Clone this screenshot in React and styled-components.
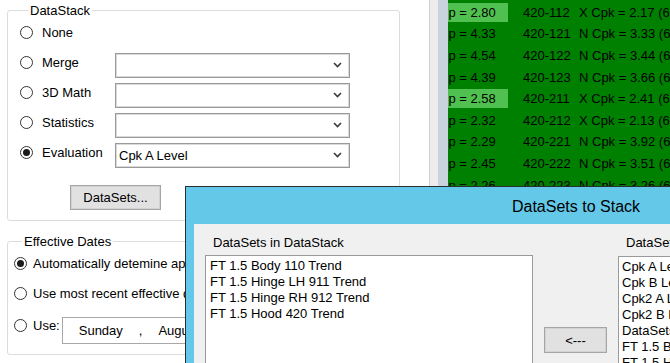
import React from "react";
import styled, { createGlobalStyle } from "styled-components";

const GlobalStyle = createGlobalStyle`
  html, body {
    margin: 0;
    padding: 0;
    overflow: hidden;
    background: #fff;
  }
  body {
    font-family: "Liberation Sans", Arial, sans-serif;
    font-size: 13px;
    color: #000;
  }
`;

const Screen = styled.div`
  position: relative;
  width: 670px;
  height: 363px;
  overflow: hidden;
  display: flex;
  background: #fff;
`;

const LeftPane = styled.div`
  width: 429px;
  flex: none;
  box-sizing: border-box;
  padding-left: 7px;
`;

const GroupBox = styled.fieldset`
  box-sizing: border-box;
  width: 393px;
  margin: ${(p) => p.$top}px 0 0 0;
  padding: 0 0 ${(p) => p.$bottom}px ${(p) => p.$indent}px;
  border: 1px solid #dcdcdc;
  border-radius: 3px;
  min-inline-size: 0;
`;

const Legend = styled.legend`
  margin-left: 8px;
  padding: 0 2px;
  line-height: 15px;
  font-size: 13px;
`;

const OptionRow = styled.div`
  display: flex;
  align-items: flex-start;
  height: ${(p) => p.$h || 30}px;
`;

const RadioLabel = styled.div`
  display: flex;
  align-items: center;
  gap: ${(p) => p.$gap}px;
  width: ${(p) => (p.$w ? `${p.$w}px` : "auto")};
  height: 30px;
  flex: none;
  white-space: nowrap;
`;

const Radio = styled.span`
  box-sizing: border-box;
  width: 13px;
  height: 13px;
  flex: none;
  border-radius: 50%;
  border: 1px solid #333;
  background: #fff;
  display: flex;
  align-items: center;
  justify-content: center;

  &::after {
    content: "";
    width: 7px;
    height: 7px;
    border-radius: 50%;
    background: ${(p) => (p.$checked ? "#1a1a1a" : "transparent")};
  }
`;

const Combo = styled.div`
  box-sizing: border-box;
  width: 235px;
  height: 25px;
  margin-top: 5px;
  padding: 0 7px 0 3px;
  border: 1px solid #999;
  box-shadow: inset 0 0 0 1px #dadada;
  background: #fff;
  display: flex;
  align-items: center;
  justify-content: space-between;
`;

const Button = styled.div`
  box-sizing: border-box;
  width: ${(p) => p.$w}px;
  height: ${(p) => p.$h}px;
  margin: ${(p) => p.$margin};
  border: 1px solid #a5a5a5;
  box-shadow: inset 0 0 0 1px #d2d2d2;
  background: #e1e1e1;
  display: flex;
  align-items: center;
  justify-content: center;
`;

const DatePicker = styled.div`
  box-sizing: border-box;
  width: 200px;
  height: 27px;
  margin: 6.5px 0 0 2px;
  border: 1px solid #a8a8a8;
  background: #fff;
  display: flex;
  align-items: center;
  white-space: nowrap;

  span {
    margin-left: 16px;
  }
`;

const Splitter = styled.div`
  width: 19px;
  flex: none;
  box-sizing: border-box;
  border-left: 1px solid #cfcfcf;
  background: linear-gradient(to right, #ececec 0 8px, #c8d3de 8px);
`;

const Grid = styled.div`
  flex: 1;
  overflow: hidden;
  background: #008000;
`;

const GridRows = styled.div`
  margin-left: -10px;
  padding-top: 1.5px;
`;

const GridRow = styled.div`
  display: flex;
  align-items: center;
  height: 21.6px;
  white-space: nowrap;
`;

const Cell = styled.div`
  flex: none;
  box-sizing: border-box;
  width: ${(p) => p.$w}px;
  height: 19px;
  line-height: 19px;
  padding-left: ${(p) => p.$pad || 0}px;
  background: ${(p) => (p.$hot ? "#50c050" : "transparent")};
`;

const Window = styled.div`
  position: absolute;
  left: 185px;
  top: 186px;
  width: 782px;
  height: 260px;
  box-sizing: border-box;
  border: 1px solid #2d2d2d;
  background: #64c8e9;
  padding: 0 8px 8px;
  display: flex;
  flex-direction: column;
`;

const TitleBar = styled.div`
  height: 37px;
  flex: none;
  padding-top: 3px;
  box-sizing: border-box;
  display: flex;
  align-items: center;
  justify-content: center;
  font-size: 16px;
  color: #000;
`;

const Client = styled.div`
  flex: 1;
  background: #f0f0f0;
  display: flex;
  align-items: flex-start;
`;

const ListColumn = styled.div`
  width: 328px;
  flex: none;
  margin-left: ${(p) => p.$left || 0}px;
  padding-top: 11px;
`;

const ListTitle = styled.div`
  line-height: 16px;
  padding-left: 8px;
  white-space: nowrap;
`;

const ListBox = styled.div`
  box-sizing: border-box;
  height: 200px;
  margin-top: ${(p) => p.$top}px;
  padding: 2px ${(p) => p.$pad}px;
  border: 1px solid #9a9a9a;
  background: #fff;
  overflow: hidden;
`;

const ListItem = styled.div`
  line-height: 16px;
  white-space: nowrap;
`;

const MoveColumn = styled.div`
  width: 85px;
  flex: none;
  display: flex;
  justify-content: center;
`;

const Chevron = () => (
  <svg width="9" height="6" viewBox="0 0 9 6">
    <path d="M1 1 L4.5 4.5 L8 1" fill="none" stroke="#3a3a3a" strokeWidth="1.6" />
  </svg>
);

const stackOptions = [
  { label: "None" },
  { label: "Merge", combo: "" },
  { label: "3D Math", combo: "" },
  { label: "Statistics", combo: "" },
  { label: "Evaluation", combo: "Cpk A Level", checked: true },
];

const gridData = [
  ["Cp = 2.80", "420-112", "X Cpk = 2.17 (60)", true],
  ["Cp = 4.33", "420-121", "N Cpk = 3.33 (60)"],
  ["Cp = 4.54", "420-122", "N Cpk = 3.44 (60)"],
  ["Cp = 4.39", "420-123", "N Cpk = 3.66 (60)"],
  ["Cp = 2.58", "420-211", "X Cpk = 2.41 (60)", true],
  ["Cp = 2.32", "420-212", "X Cpk = 2.13 (60)"],
  ["Cp = 2.29", "420-221", "N Cpk = 3.92 (60)"],
  ["Cp = 2.45", "420-222", "N Cpk = 3.51 (60)"],
  ["Cp = 2.26", "420-223", "N Cpk = 3.26 (60)"],
];

const inStack = [
  "FT 1.5 Body 110 Trend",
  "FT 1.5 Hinge LH 911 Trend",
  "FT 1.5 Hinge RH 912 Trend",
  "FT 1.5 Hood 420 Trend",
];

const available = [
  "Cpk A Level",
  "Cpk B Level",
  "Cpk2 A Level",
  "Cpk2 B Level",
  "DataSets Test",
  "FT 1.5 Body 110 Trend",
  "FT 1.5 Hinge LH 911 Trend",
];

const App = () => {
  return (
    <Screen>
      <GlobalStyle />
      <LeftPane>
        <GroupBox $top={2.5} $bottom={10} $indent={12}>
          <Legend>DataStack</Legend>
          {stackOptions.map((o) => (
            <OptionRow key={o.label}>
              <RadioLabel $gap={9} $w={95}>
                <Radio $checked={o.checked} />
                {o.label}
              </RadioLabel>
              {o.combo !== undefined && (
                <Combo>
                  <span>{o.combo}</span>
                  <Chevron />
                </Combo>
              )}
            </OptionRow>
          ))}
          <Button $w={91} $h={25} $margin="17.5px 0 0 50px">
            DataSets...
          </Button>
        </GroupBox>

        <GroupBox $top={12.5} $bottom={9} $indent={6}>
          <Legend>Effective Dates</Legend>
          <OptionRow>
            <RadioLabel $gap={6}>
              <Radio $checked />
              Automatically detemine applicable dates
            </RadioLabel>
          </OptionRow>
          <OptionRow $h={32}>
            <RadioLabel $gap={6}>
              <Radio />
              Use most recent effective dates
            </RadioLabel>
          </OptionRow>
          <OptionRow $h={34}>
            <RadioLabel $gap={6}>
              <Radio />
              Use:
            </RadioLabel>
            <DatePicker>
              <span>Sunday</span>
              <span>,</span>
              <span>August</span>
            </DatePicker>
          </OptionRow>
        </GroupBox>
      </LeftPane>

      <Splitter />

      <Grid>
        <GridRows>
          {gridData.map(([a, b, c, hot]) => (
            <GridRow key={b}>
              <Cell $w={70} $pad={1} $hot={hot}>
                {a}
              </Cell>
              <Cell $w={71} $pad={15}>
                {b}
              </Cell>
              <Cell $w={200}>{c}</Cell>
            </GridRow>
          ))}
        </GridRows>
      </Grid>

      <Window>
        <TitleBar>DataSets to Stack</TitleBar>
        <Client>
          <ListColumn $left={11}>
            <ListTitle>DataSets in DataStack</ListTitle>
            <ListBox $top={4} $pad={4}>
              {inStack.map((s) => (
                <ListItem key={s}>{s}</ListItem>
              ))}
            </ListBox>
          </ListColumn>
          <MoveColumn>
            <Button $w={63} $h={26} $margin="103px 0 0 0">
              &lt;---
            </Button>
          </MoveColumn>
          <ListColumn>
            <ListTitle>DataSets Available</ListTitle>
            <ListBox $top={5} $pad={3}>
              {available.map((s) => (
                <ListItem key={s}>{s}</ListItem>
              ))}
            </ListBox>
          </ListColumn>
        </Client>
      </Window>
    </Screen>
  );
};

export default App;
